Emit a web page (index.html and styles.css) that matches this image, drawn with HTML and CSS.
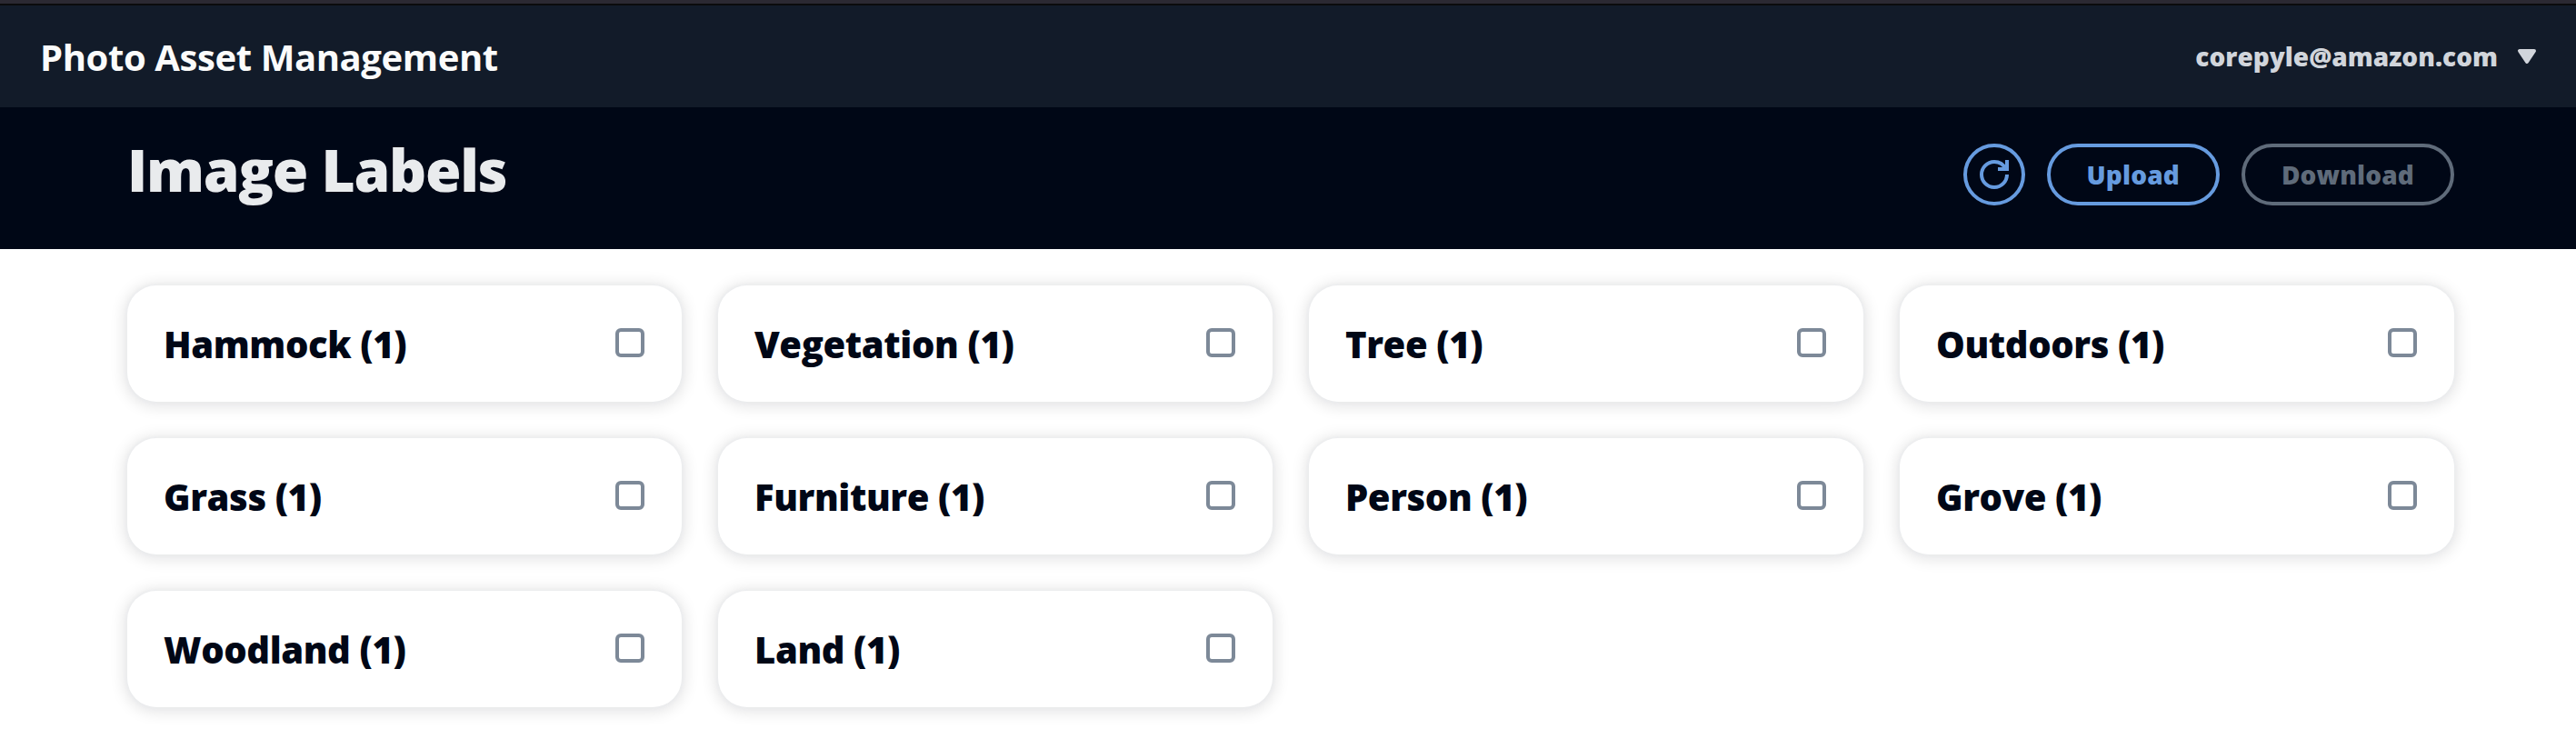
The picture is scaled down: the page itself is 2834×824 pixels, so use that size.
FILE: index.html
```html
<!DOCTYPE html>
<html lang="en">
<head>
<meta charset="utf-8">
<title>Photo Asset Management</title>
<link rel="stylesheet" href="styles.css">
</head>
<body>
<div class="window-edge"></div>
<header class="top-nav">
  <div class="brand">Photo Asset Management</div>
  <div class="account">
    <span>corepyle@amazon.com</span>
    <svg class="caret" viewBox="0 0 16 16"><path d="M4 5h8l-4 6z" fill="currentColor" stroke="currentColor" stroke-width="2" stroke-linejoin="round"/></svg>
  </div>
</header>
<section class="page-header">
  <h1>Image Labels</h1>
  <div class="actions">
    <button class="btn btn-icon" aria-label="Refresh">
      <svg class="refresh" viewBox="0 0 16 16" fill="none" stroke="currentColor" stroke-width="2"><path d="M15 8c0 3.87-3.13 7-7 7s-7-3.13-7-7 3.13-7 7-7c2.79 0 5.2 1.63 6.33 4"/><path d="M15 0v5h-5"/></svg>
    </button>
    <button class="btn">Upload</button>
    <button class="btn btn-disabled" disabled>Download</button>
  </div>
</section>
<main class="cards">
  <div class="card"><span>Hammock (1)</span><i class="check"></i></div>
  <div class="card"><span>Vegetation (1)</span><i class="check"></i></div>
  <div class="card"><span>Tree (1)</span><i class="check"></i></div>
  <div class="card"><span>Outdoors (1)</span><i class="check"></i></div>
  <div class="card"><span>Grass (1)</span><i class="check"></i></div>
  <div class="card"><span>Furniture (1)</span><i class="check"></i></div>
  <div class="card"><span>Person (1)</span><i class="check"></i></div>
  <div class="card"><span>Grove (1)</span><i class="check"></i></div>
  <div class="card"><span>Woodland (1)</span><i class="check"></i></div>
  <div class="card"><span>Land (1)</span><i class="check"></i></div>
</main>
</body>
</html>
```
FILE: styles.css
```css
* { box-sizing: border-box; }
body {
  margin: 0;
  min-height: 100vh;
  background: #fff;
  color: #000716;
  font-family: "Open Sans", sans-serif;
}
.window-edge { height: 6px; background: #2b2932; border-bottom: 2px solid #0b0b0c; }
.top-nav {
  display: flex;
  align-items: center;
  justify-content: space-between;
  height: 112px;
  padding: 0 38px 0 44px;
  background: #121b29;
}
.brand { padding-top: 1px; font-size: 40px; line-height: 48px; font-weight: 700; letter-spacing: -0.4px; color: #fbfbfb; overflow: hidden; white-space: nowrap; }
.account { display: flex; align-items: center; gap: 16px; font-size: 28px; line-height: 40px; font-weight: 800; color: #d1d5db; }
.caret { width: 32px; height: 32px; }
.page-header {
  display: flex;
  justify-content: space-between;
  height: 156px;
  padding: 40px 134px 0 140px;
  background: #000716;
}
h1 { margin: -11px 0 0; font-size: 64px; line-height: 80px; font-weight: 800; letter-spacing: -0.02em; color: #e9ebed; }
.actions { display: flex; gap: 24px; }
.btn {
  height: 68px;
  padding: 0 40px;
  border: 4px solid currentColor;
  border-radius: 40px;
  background: none;
  color: #669bdf;
  font: 800 28px/40px "Open Sans", sans-serif;
  letter-spacing: 0.005em;
}
.btn-icon { display: flex; align-items: center; justify-content: center; width: 68px; padding: 0; }
.refresh { width: 32px; height: 32px; overflow: visible; }
.btn-disabled { color: #5f6b7a; }
.cards { display: grid; grid-template-columns: repeat(4, 1fr); gap: 40px; padding: 40px 134px 46px 140px; }
.card {
  display: flex;
  align-items: center;
  justify-content: space-between;
  height: 128px;
  padding: 0 41px 0 40px;
  border-radius: 32px;
  background: #fff;
  box-shadow: 0 0 2px 2px rgba(233, 235, 237, 0.5), 0 2px 16px 4px rgba(0, 7, 22, 0.1);
  font-size: 40px;
  line-height: 48px;
  font-weight: 800;
  letter-spacing: -0.01em;
}
.card span { padding-top: 2px; }
.check { width: 32px; height: 32px; margin-top: -2px; border: 4px solid #7d8998; border-radius: 6px; }
```
